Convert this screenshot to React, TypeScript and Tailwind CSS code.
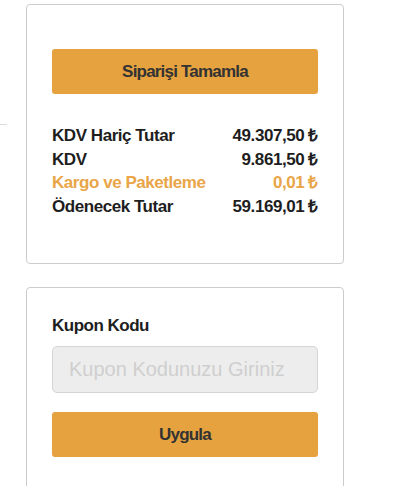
import React from 'react'

const ROWS = [
  { label: 'KDV Hariç Tutar', value: '49.307,50 ₺', accent: false },
  { label: 'KDV', value: '9.861,50 ₺', accent: false },
  { label: 'Kargo ve Paketleme', value: '0,01 ₺', accent: true },
  { label: 'Ödenecek Tutar', value: '59.169,01 ₺', accent: false },
]

export default function App() {
  return (
    <div className="relative min-h-[486px] bg-white font-['Liberation_Sans',Arial,sans-serif] text-[#222] leading-[23px]">
      {/* stray divider on the left edge */}
      <div className="absolute left-0 top-[124px] w-[7px] border-t border-[#ddd]" />

      <div className="pt-[4px] pl-[26px] flex flex-col gap-[23px]">
        {/* Summary */}
        <div className="w-[318px] h-[260px] border border-[#ccc] rounded-[4px] px-[25px] pt-[44px]">
          <button
            type="button"
            className="w-full h-[45px] rounded-[3px] bg-[#e6a23f] text-[#333] text-[17px] tracking-[-0.8px] font-bold"
          >
            Siparişi Tamamla
          </button>

          <div className="mt-[30px] text-[17px] tracking-[-0.45px] font-bold">
            {ROWS.map((row) => (
              <div
                key={row.label}
                className={`flex justify-between h-[23.7px] leading-[23.7px] ${row.accent ? 'text-[#e9a547]' : 'text-[#1e1e1e]'}`}
              >
                <span>{row.label}</span>
                <span>{row.value}</span>
              </div>
            ))}
          </div>
        </div>

        {/* Coupon */}
        <div className="w-[318px] h-[220px] border border-[#ccc] rounded-[4px] px-[25px] pt-[26px]">
          <p className="text-[17px] tracking-[-0.5px] font-bold text-[#1e1e1e]">Kupon Kodu</p>
          <input
            type="text"
            placeholder="Kupon Kodunuzu Giriniz"
            className="mt-[9px] w-full h-[47px] rounded-[5px] bg-[#ededed] border border-[#d5d5d5] px-[16px] text-[20px] placeholder:text-[#cfcfcf] outline-none"
          />
          <button
            type="button"
            className="mt-[19px] w-full h-[45px] rounded-[3px] bg-[#e6a23f] text-[#333] text-[17px] tracking-[-0.8px] font-bold"
          >
            Uygula
          </button>
        </div>
      </div>
    </div>
  )
}
